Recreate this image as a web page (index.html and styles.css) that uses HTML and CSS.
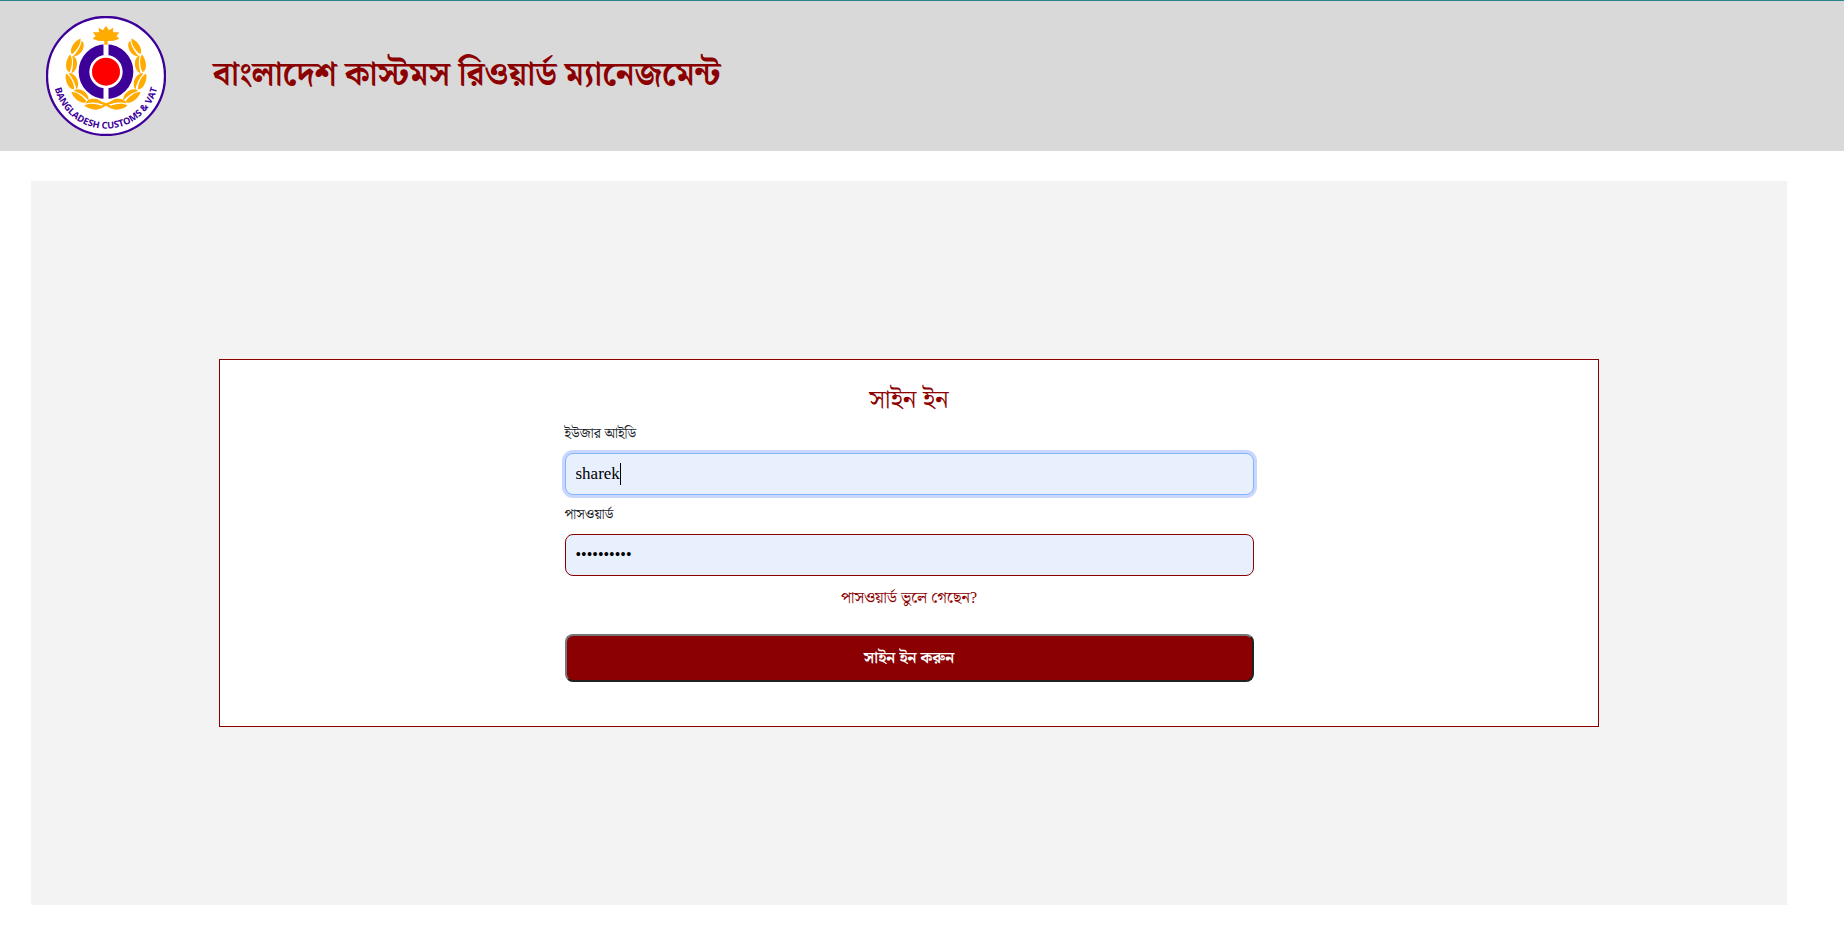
FILE: index.html
```html
<!DOCTYPE html>
<html lang="bn">
<head>
    <meta charset="UTF-8">
    <meta name="viewport" content="width=device-width, initial-scale=1.0">
    <title>বাংলাদেশ কাস্টমস রিওয়ার্ড ম্যানেজমেন্ট</title>
    <link rel="stylesheet" href="styles.css">
</head>
<body>
    <header class="header">
        <svg class="logo" viewBox="18 48 360 360" role="img" aria-label="Bangladesh Customs &amp; VAT">
            <defs>
                <path id="motto" d="M40 228 A158 158 0 0 0 356 228"/>
                <g id="leaf">
                    <path d="M-24 -3 C-20 -20 12 -22 29 -12 C20 -1 -8 2 -24 -3Z"/>
                    <path d="M-27 3 C-12 6 12 3 26 -5 C28 12 -10 26 -27 3Z"/>
                </g>
                <g id="branch">
                    <use href="#leaf" transform="translate(113 146) rotate(-52)"/>
                    <use href="#leaf" transform="translate(96 194) rotate(-78)"/>
                    <use href="#leaf" transform="translate(98 244) rotate(-108)"/>
                    <use href="#leaf" transform="translate(124 287) rotate(-138)"/>
                    <use href="#leaf" transform="translate(164 311) rotate(-168)"/>
                    <path d="M180 303 Q198 308 220 321 L214 326 Q196 314 176 310Z"/>
                </g>
            </defs>
            <circle cx="198" cy="228" r="177" fill="#fff" stroke="#3d0099" stroke-width="7"/>
            <g fill="#ffab00">
                <use href="#branch"/>
                <use href="#branch" transform="translate(396 0) scale(-1 1)"/>
            </g>
            <circle cx="198" cy="215" r="66" fill="none" stroke="#3d0099" stroke-width="32"/>
            <path d="M198 128 V166 M198 264 V300" stroke="#fff" stroke-width="15"/>
            <circle cx="198" cy="215" r="42" fill="#f00"/>
            <path d="M198 77 L207 91 L220 83 L219 97 L238 97 L229 108 L238 116 L222 122 L203 123 V134 H193 V123 L174 122 L158 116 L167 108 L158 97 L177 97 L176 83 L189 91Z" fill="#ffab00"/>
            <text class="logo-text"><textPath href="#motto" startOffset="50%">BANGLADESH CUSTOMS &amp; VAT</textPath></text>
        </svg>
        <h1 class="site-title">বাংলাদেশ কাস্টমস রিওয়ার্ড ম্যানেজমেন্ট</h1>
    </header>

    <main class="main">
        <section class="card">
            <form class="login-form">
                <h2 class="form-title">সাইন ইন</h2>
                <label class="form-label" for="userId">ইউজার আইডি</label>
                <div class="input-wrap">
                    <input class="form-input" type="text" id="userId" name="userId" value="sharek" autocomplete="username" autofocus>
                    <span class="caret"></span>
                </div>
                <label class="form-label" for="password">পাসওয়ার্ড</label>
                <input class="form-input" type="password" id="password" name="password" value="1234567890" autocomplete="current-password">
                <a class="forgot-link" href="#">পাসওয়ার্ড ভুলে গেছেন?</a>
                <button class="login-button" type="submit">সাইন ইন করুন</button>
            </form>
        </section>
    </main>

    <script>
        const userId = document.getElementById('userId');
        const caret = document.querySelector('.caret');
        userId.focus();
        userId.setSelectionRange(userId.value.length, userId.value.length);

        // the drawn caret only marks the saved id, the real one takes over on input
        function hideCaret() {
            caret.hidden = true;
        }
        userId.addEventListener('keydown', hideCaret);
        userId.addEventListener('blur', hideCaret);
    </script>
</body>
</html>
```
FILE: styles.css
```css
* {
    box-sizing: border-box;
}
body {
    display: flex;
    flex-direction: column;
    min-height: 100vh;
    margin: 0;
    background-color: #ffffff;
    color: #212529;
    font-family: "Liberation Serif", "Noto Serif Bengali", "Noto Sans Bengali", serif;
    font-size: 16px;
    line-height: 24px;
}
.header {
    display: flex;
    align-items: center;
    gap: 47px;
    padding: 15px 46px;
    border-top: 1px solid #26868a;
    background-color: #d9d9d9;
}
.logo {
    flex: none;
    width: 120px;
    height: 120px;
}
.logo-text {
    fill: #3d0099;
    font-family: "Open Sans", "Noto Sans", sans-serif;
    font-size: 28px;
    font-weight: 700;
    text-anchor: middle;
}
.site-title {
    margin: 0;
    padding-bottom: 4px;
    color: #8b0000;
    font-size: 33px;
    font-weight: 700;
    line-height: 40px;
}
.main {
    display: flex;
    flex: 1;
    justify-content: center;
    align-items: center;
    margin: 30px 57px 40px 31px;
    background-color: #f3f3f3;
}
.card {
    width: 100%;
    max-width: 1380px;
    padding: 26px 0 44px;
    border: 1px solid #8b0000;
    background-color: #ffffff;
}
.login-form {
    display: flex;
    flex-direction: column;
    width: 50%;
    margin: 0 auto;
}
.form-title {
    margin: 0;
    color: #8b0000;
    font-size: 26px;
    font-weight: 400;
    line-height: 28px;
    text-align: center;
}
.form-label {
    margin: 8px 0 7px;
    font-size: 14px;
}
.input-wrap {
    display: grid;
    position: relative;
}
.caret {
    position: absolute;
    top: 10px;
    left: 55px;
    width: 1px;
    height: 22px;
    background-color: #000000;
}
.form-input {
    height: 42px;
    padding: 0 10px;
    border: 1px solid #8b0000;
    border-radius: 8px;
    background-color: #e8f0fe;
    color: #000000;
    font-family: inherit;
    font-size: 17px;
}
.form-input[type="password"] {
    font-size: 16px;
}
.form-input:focus {
    border-color: #80b5ff;
    outline: none;
    box-shadow: 0 0 0 3px #cbd6fe;
}
.forgot-link {
    align-self: center;
    margin: 10px 0 24px;
    color: #8b0000;
    text-decoration: none;
}
.login-button {
    height: 48px;
    border: 2px solid;
    border-color: #767676 #212121 #212121 #767676;
    border-radius: 8px;
    background-color: #8b0000;
    color: #ffffff;
    font-family: inherit;
    font-size: 16px;
    font-weight: 700;
    cursor: pointer;
}
```
